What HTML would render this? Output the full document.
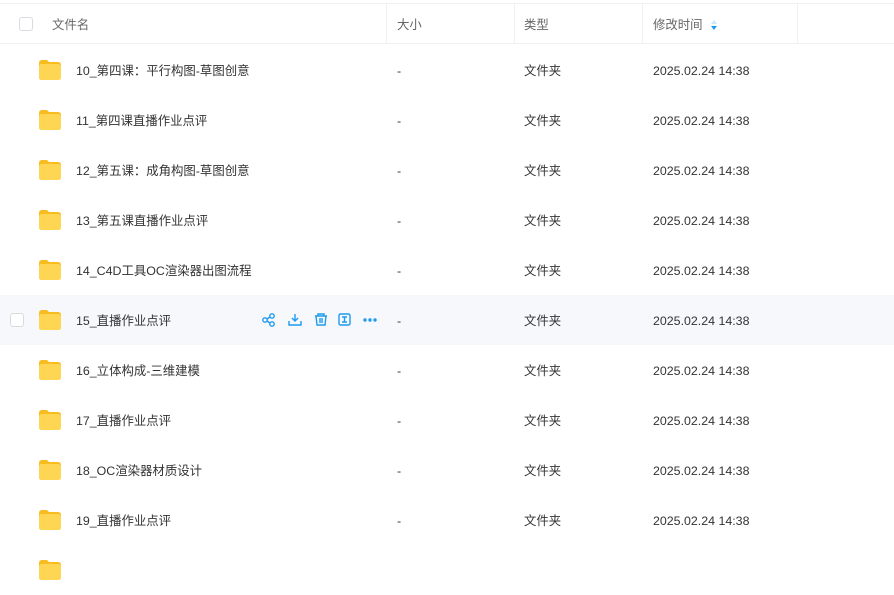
<!DOCTYPE html><html><head><meta charset="utf-8"><style>
body{margin:0;width:894px;height:561px;overflow:hidden;background:#fff;font-family:"Liberation Sans","Noto Sans CJK SC",sans-serif;font-size:12.4px;color:#333}
.hd{position:absolute;top:3px;left:0;width:894px;height:41px;border-top:1px solid #f0f0f0;border-bottom:1px solid #eef0f3;box-sizing:border-box}
.hd span{position:absolute;top:1px;line-height:40px;color:#666}
.sep{position:absolute;top:3px;width:1px;height:41px;background:#f0f0f0}
.cb{position:absolute;width:12px;height:12px;border:1px solid #d8dbe0;border-radius:3px;background:#fff}
.row{position:absolute;left:0;width:894px;height:50px}
.row span{position:absolute;top:1px;line-height:50px;height:50px;white-space:nowrap}
.fold{position:absolute;left:38px;top:14px;width:24px;height:22px}
</style></head><body>
<div class="hd"><div class="cb" style="left:19px;top:13px"></div><span style="left:52px">文件名</span><span style="left:397px">大小</span><span style="left:524px">类型</span><span style="left:653px">修改时间</span>
<svg style="position:absolute;left:710px;top:15px" width="8" height="12"><path d="M4 1L7 5H1Z" fill="#cfe6fb"/><path d="M4 11L7 7H1Z" fill="#1e9bf0"/></svg></div>
<div class="sep" style="left:386px"></div><div class="sep" style="left:514px"></div><div class="sep" style="left:642px"></div><div class="sep" style="left:797px"></div>
<div id="rows"></div>
<script>
var n=["10_第四课：平行构图-草图创意","11_第四课直播作业点评","12_第五课：成角构图-草图创意","13_第五课直播作业点评","14_C4D工具OC渲染器出图流程","15_直播作业点评","16_立体构成-三维建模","17_直播作业点评","18_OC渲染器材质设计","19_直播作业点评",""];
var h="";var f='<svg class="fold" viewBox="0 0 24 22"><path d="M1 4Q1 1 4 1H9L11 3H20Q23 3 23 6V18Q23 21 20 21H4Q1 21 1 18Z" fill="#f7bd20"/><path d="M1 8Q1 5 4 5H20Q23 5 23 8V18Q23 21 20 21H4Q1 21 1 18Z" fill="#ffd654"/></svg>';
n.forEach(function(t,i){var top=45+i*50;var hl=i==5;
h+='<div class="row" style="top:'+top+'px;'+(hl?'background:#f6f8fc':'')+'">'+(hl?'<div class="cb" style="left:10px;top:18px"></div>':'')+f+(t?'<span style="left:76px">'+t+'</span><span style="left:397px">-</span><span style="left:524px">文件夹</span><span style="left:653px">2025.02.24 14:38</span>':'');
if(hl)h+='<svg style="position:absolute;left:262px;top:18px" width="118" height="14" fill="none" stroke="#1e9bf0" stroke-width="1.4"><circle cx="3" cy="7" r="2.2"/><circle cx="10" cy="3" r="2.2"/><circle cx="10" cy="11" r="2.2"/><path d="M5 6L8 4M5 8L8 10"/><path d="M33 1V8M30 5L33 8L36 5M27 8V12H39V8"/><path d="M53 3H65M56 3V1H62V3M54 3L55 12H63L64 3M58 5V10M60 5V10"/><rect x="77" y="1" width="11" height="11" rx="1.5"/><path d="M80 4H85M82.5 4V9M80 9H85"/><circle cx="103" cy="7" r="1" fill="#1e9bf0"/><circle cx="108" cy="7" r="1" fill="#1e9bf0"/><circle cx="113" cy="7" r="1" fill="#1e9bf0"/></svg>';
h+='</div>';});
document.getElementById("rows").innerHTML=h;
</script></body></html>
